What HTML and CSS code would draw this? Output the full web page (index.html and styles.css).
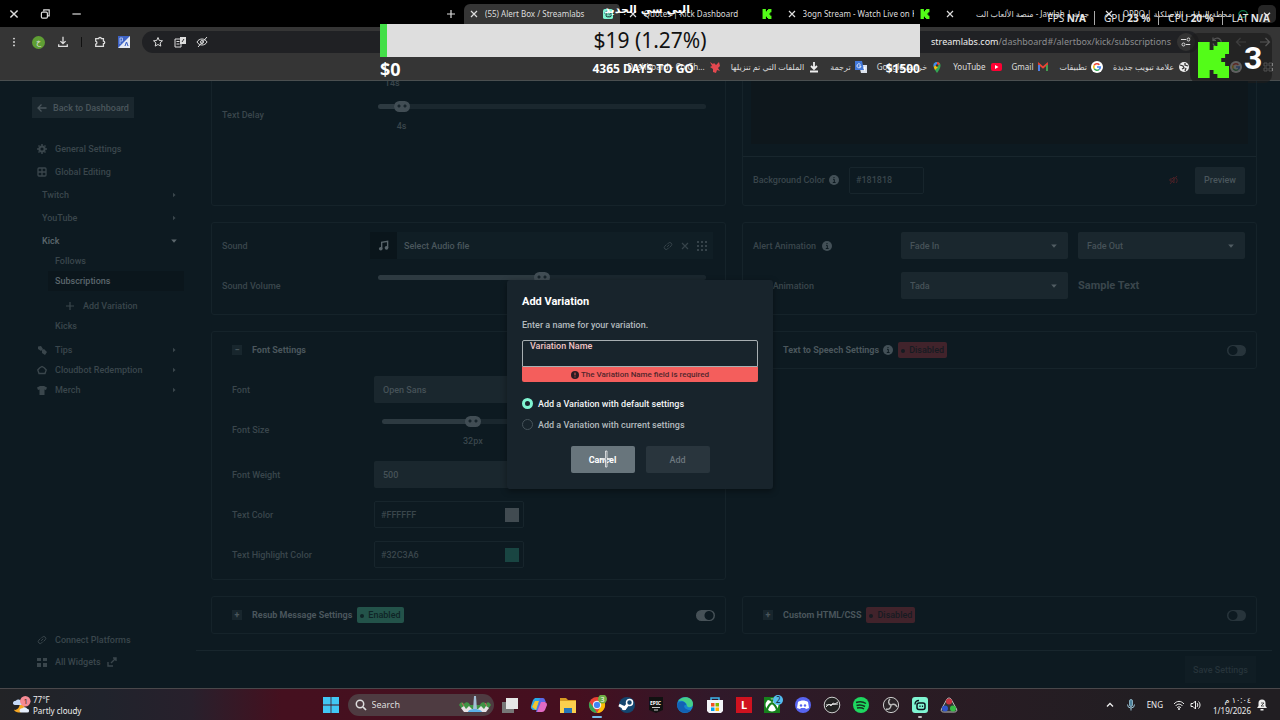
FILE: index.html
```html
<!DOCTYPE html>
<html lang="en">
<head>
    <meta charset="UTF-8">
    <meta name="viewport" content="width=device-width, initial-scale=1.0">
    <title>Alert Box / Streamlabs</title>
    <link rel="stylesheet" href="styles.css">
</head>
<body>
    <!-- shared icons -->
    <svg class="sprite" aria-hidden="true">
        <symbol id="close" viewBox="0 0 10 10"><path d="M2 2l6 6M8 2l-6 6" fill="none" stroke="currentColor" stroke-width="1.2"/></symbol>
        <symbol id="kick" viewBox="0 0 16 18"><path d="M0 0h6v4h2V2h2V0h6v6h-2v2h-2v2h2v2h2v6h-6v-2H8v-2H6v4H0z" fill="#53fc18"/></symbol>
        <symbol id="google" viewBox="0 0 12 12"><circle cx="6" cy="6" r="6" fill="#fff"/><g fill="none" stroke-width="1.6"><path d="M8.4 3.8A3.3 3.3 0 0 0 3.2 4.300" stroke="#ea4335"/><path d="M3.200 4.300a3.300 3.300 0 0 0 0 3.400" stroke="#fbbc05"/><path d="M3.200 7.700a3.300 3.300 0 0 0 4.900 .8" stroke="#34a853"/><path d="M8.100 8.500A3.300 3.300 0 0 0 9.300 6H6" stroke="#4285f4"/></g></symbol>
        <symbol id="streamlabs" viewBox="0 0 16 16"><rect width="16" height="16" rx="3" fill="#80f5d2"/><rect x="5" y="6" width="8" height="6.500" rx="2" fill="none" stroke="#09161d" stroke-width="1.500"/><path d="M3 7.500C3 5 4.500 3.500 7 3.500" fill="none" stroke="#09161d" stroke-width="1.300"/><path d="M8 8.500v1.500M10.500 8.500v1.500" stroke="#09161d" stroke-width="1.200"/></symbol>
        <symbol id="link" viewBox="0 0 12 12"><path d="M5 7L7.500 4.500M5 4l1.500-1.500a2.300 2.300 0 0 1 3.300 3.300L8 7.600M7 8L5.500 9.500a2.300 2.300 0 0 1-3.300-3.300L4 4.400" fill="none" stroke="currentColor" stroke-width="1.200"/></symbol>
        <symbol id="info" viewBox="0 0 10 10"><circle cx="5" cy="5" r="5" fill="currentColor"/><path d="M4 4.300h1.300v3.200M3.800 7.500h2.800M4.500 2.500h1" fill="none" stroke="#0d1a21" stroke-width="1"/></symbol>
        <symbol id="right" viewBox="0 0 6 6"><path d="M2 .8L4.600 3 2 5.200z" fill="currentColor"/></symbol>
        <symbol id="down" viewBox="0 0 6 6"><path d="M.2 1.500h5.600L3 4.800z" fill="currentColor"/></symbol>
        <symbol id="plus" viewBox="0 0 10 10"><path d="M5 1v8M1 5h8" stroke="currentColor" stroke-width="1.200"/></symbol>
        <symbol id="translate" viewBox="0 0 12 12"><rect width="12" height="12" fill="#e4e8f2"/><path d="M0 0h12L0 12z" fill="#3d62c4"/><path d="M2 8V2h2.500v3H2M7 10l1.500-4L10 10" fill="none" stroke="#a9bbec"/><path d="M7 10l1.500-4L10 10" fill="none" stroke="#3d62c4"/></symbol>
    </svg>

    <header class="browser">
        <div class="tab-strip">
            <div class="window-controls">
                <button aria-label="Close"><svg viewBox="0 0 10 10"><use href="#close"/></svg></button>
                <button aria-label="Restore"><svg viewBox="0 0 10 10"><rect x="2" y="3.500" width="5" height="5" rx="1" fill="none" stroke="currentColor"/><path d="M4 3V1.500h4.500V6.500H7.500" fill="none" stroke="currentColor"/></svg></button>
                <button aria-label="Minimize"><svg viewBox="0 0 10 10"><path d="M2 5h7" stroke="currentColor"/></svg></button>
            </div>
            <button class="new-tab" aria-label="New tab"><svg viewBox="0 0 10 10"><use href="#plus"/></svg></button>
            <div class="tabs">
                <div class="tab active">
                    <svg class="tab-close"><use href="#close"/></svg>
                    <span>(55) Alert Box / Streamlabs</span>
                    <svg class="favicon"><use href="#streamlabs"/></svg>
                </div>
                <div class="tab">
                    <svg class="tab-close"><use href="#close"/></svg>
                    <span>Quotes | Kick Dashboard</span>
                    <svg class="favicon"><use href="#kick"/></svg>
                </div>
                <div class="tab">
                    <svg class="tab-close"><use href="#close"/></svg>
                    <span>3ogn Stream - Watch Live on Kick</span>
                    <svg class="favicon"><use href="#kick"/></svg>
                </div>
                <div class="tab">
                    <svg class="tab-close"><use href="#close"/></svg>
                    <span dir="rtl">جولة | Jawlah - منصة الألعاب الت</span>
                </div>
                <div class="tab">
                    <svg class="tab-close"><use href="#close"/></svg>
                    <span dir="rtl">محطة البيانات اللاسلكية | OPPO</span>
                    <svg class="favicon" viewBox="0 0 12 12"><ellipse cx="6" cy="6" rx="5" ry="4" fill="none" stroke="#0b7a45" stroke-width="1.500"/></svg>
                </div>
            </div>
            <button class="tab-search" aria-label="Search tabs"><svg viewBox="0 0 10 10"><path d="M2.500 4L5 6.500 7.500 4" fill="none" stroke="currentColor" stroke-width="1.200"/></svg></button>
        </div>

        <div class="toolbar">
            <button aria-label="Menu"><svg viewBox="0 0 14 14"><g fill="currentColor"><circle cx="7" cy="3" r="1.100"/><circle cx="7" cy="7" r="1.100"/><circle cx="7" cy="11" r="1.100"/></g></svg></button>
            <span class="avatar">&#1582;</span>
            <button aria-label="Downloads"><svg viewBox="0 0 14 14"><path d="M7 1v8M4 6l3 3 3-3M2 9.500V12h10V9.500" fill="none" stroke="currentColor" stroke-width="1.500"/></svg></button>
            <i class="toolbar-line"></i>
            <button aria-label="Extensions"><svg viewBox="0 0 14 14"><path d="M2 3h3.500a1.500 1.500 0 0 1 3 0H11v3a1.500 1.500 0 0 1 0 3v3H2V9.500a1.800 1.800 0 0 0 0-3.500z" fill="none" stroke="currentColor" stroke-width="1.500"/></svg></button>
            <button aria-label="Translate"><svg viewBox="0 0 12 12"><use href="#translate"/></svg></button>
            <div class="address">
                <svg viewBox="0 0 12 12"><path d="M6 1.500l1.300 3 3.200.3-2.400 2.100.7 3.200L6 8.500l-2.800 1.600.7-3.200L1.500 4.800l3.200-.3z" fill="none" stroke="currentColor"/></svg>
                <svg viewBox="0 0 12 12"><path d="M1 3h6v8H1zM2.500 5.500h3M2.500 8h3" fill="none" stroke="currentColor"/><rect x="6" y="1" width="6" height="7" fill="currentColor"/><path d="M8 6l2-3" stroke="#333"/></svg>
                <svg viewBox="0 0 12 12"><path d="M1 6c2-4 8-4 10 0-2 4-8 4-10 0zM2 11l9-10" fill="none" stroke="currentColor"/><circle cx="6" cy="6" r="1.500" fill="none" stroke="currentColor"/></svg>
                <span class="url"><b>streamlabs.com</b>/dashboard#/alertbox/kick/subscriptions</span>
                <span class="site-info"><svg viewBox="0 0 12 12"><path d="M1 3.500h5M6 8.500h5" stroke="currentColor"/><circle cx="8.500" cy="3.500" r="1.500" fill="none" stroke="currentColor"/><circle cx="3.500" cy="8.500" r="1.500" fill="none" stroke="currentColor"/></svg></span>
            </div>
            <button aria-label="Reload"><svg viewBox="0 0 12 12"><path d="M2 1.500v3h3M2.300 4.500A4.200 4.200 0 1 1 2 7.500" fill="none" stroke="currentColor" stroke-width="1.200"/></svg></button>
            <button class="faded" aria-label="Forward"><svg viewBox="0 0 12 12"><path d="M11 6H1.500M5.500 2l-4 4 4 4" fill="none" stroke="currentColor" stroke-width="1.200"/></svg></button>
            <button aria-label="Back"><svg viewBox="0 0 12 12"><path d="M1 6h9.500M6.500 2l4 4-4 4" fill="none" stroke="currentColor" stroke-width="1.200"/></svg></button>
        </div>

        <nav class="bookmarks" dir="rtl">
            <svg viewBox="0 0 12 12"><path d="M2 2h3v3H2zM7 2h3v3H7zM2 7h3v3H2zM7 7h3v3H7z" fill="none" stroke="#ccc"/></svg>
            <svg class="bookmark-google" viewBox="0 0 12 12"><use href="#google"/></svg>
            <a href="#" class="bookmark bookmark-first"><svg viewBox="0 0 12 12"><circle cx="6" cy="6" r="5" fill="#eee"/><path d="M2 4l3 1 1 2-2 1M7 2v2l3 1M8 7l-1 3" fill="none" stroke="#333" stroke-width="1.300"/></svg>علامة تبويب جديدة</a>
            <a href="#" class="bookmark"><svg viewBox="0 0 12 12"><use href="#google"/></svg>تطبيقات</a>
            <a href="#" class="bookmark"><svg viewBox="0 0 12 12"><path d="M2 10V3l4 3.500L10 3v7" fill="none" stroke="#ea4335" stroke-width="1.800"/><path d="M2 10V4" stroke="#4285f4" stroke-width="1.800"/><path d="M10 10V4" stroke="#34a853" stroke-width="1.800"/></svg>Gmail</a>
            <a href="#" class="bookmark"><svg viewBox="0 0 12 12"><rect x="1" y="2" width="11" height="8" rx="2" fill="#f03"/><path d="M5 4l3.500 2L5 8z" fill="#fff"/></svg>YouTube</a>
            <a href="#" class="bookmark"><svg viewBox="0 0 12 12"><path d="M6 12C4 9 2.500 7 2.500 4.500a3.500 3.500 0 0 1 7 0C9.500 7 8 9 6 12z" fill="#34a853"/><path d="M2.800 6A3.500 3.500 0 0 1 6 1v3z" fill="#4285f4"/><path d="M6 1a3.500 3.500 0 0 1 3 2L6 5z" fill="#ea4335"/><path d="M2.800 6L5 4l2 2-3 3z" fill="#fbbc05"/><circle cx="6" cy="4.500" r="1.200" fill="#333"/></svg>خرائط Google</a>
            <a href="#" class="bookmark"><svg viewBox="0 0 12 12"><path d="M4 4h8v8H6z" fill="#dce3ee"/><path d="M0 0h7l2 9H0z" fill="#4277d8"/><path d="M5.500 3.500A2 2 0 1 0 6 5H4M8 7h3M9.500 6v4" fill="none" stroke="#fff" stroke-width=".8"/></svg>ترجمة</a>
            <a href="#" class="bookmark"><svg viewBox="0 0 12 12"><path d="M6 1v6M3 5l3 3 3-3M2 10.500h8" fill="none" stroke="#eee" stroke-width="1.800"/></svg>الملفات التي تم تنزيلها</a>
            <a href="#" class="bookmark"><svg viewBox="0 0 12 12"><path d="M1 1l3 2 1-1 2 2 3-3 1 4-2 2 2 3-3-1-1 3-3-1V8L1 6l2-1z" fill="#e5484f"/></svg><span dir="ltr">Dashboard - Co Gh...</span></a>
        </nav>
    </header>

    <!-- stream widgets drawn over the browser -->
    <div class="goal">
        <div class="goal-bar"><div class="goal-fill"></div><span>$19 (1.27%)</span></div>
        <div class="goal-labels"><b class="goal-start">$0</b><b>4365 DAYS TO GO</b><b>$1500</b></div>
    </div>
    <div class="goal-title" dir="rtl">البي سي الجديد</div>
    <div class="stats"><span>FPS <b>N/A</b></span><span>GPU <b>23 %</b></span><span>CPU <b>20 %</b></span><span>LAT <b>N/A</b></span></div>
    <div class="viewers"><svg viewBox="0 0 16 18" preserveAspectRatio="none"><use href="#kick"/></svg><b>3</b></div>

    <div class="page">
        <aside class="sidebar">
            <button class="back"><svg viewBox="0 0 10 10"><path d="M9.500 5H1M4.500 1.500L1 5l3.500 3.500" fill="none" stroke="currentColor" stroke-width="1.300"/></svg>Back to Dashboard</button>
            <nav class="menu">
                <a href="#" class="item"><svg viewBox="0 0 10 10"><circle cx="5" cy="5" r="2.600" fill="none" stroke="currentColor" stroke-width="2"/><path d="M5 0v2M5 8v2M0 5h2M8 5h2M1.500 1.500l1 1M7.500 7.500l1 1M8.500 1.500l-1 1M1.500 8.500l1-1" stroke="currentColor" stroke-width="1.500"/></svg>General Settings</a>
                <a href="#" class="item"><svg viewBox="0 0 10 10"><rect x="1" y="1" width="8" height="8" rx="1" fill="none" stroke="currentColor" stroke-width="1.300"/><path d="M5 1v8M1 5h8" stroke="currentColor" stroke-width="1.300"/></svg>Global Editing</a>
                <a href="#" class="item platform">Twitch<svg class="arrow"><use href="#right"/></svg></a>
                <a href="#" class="item platform">YouTube<svg class="arrow"><use href="#right"/></svg></a>
                <a href="#" class="item platform open">Kick<svg class="arrow"><use href="#down"/></svg></a>
                <div class="submenu">
                    <a href="#">Follows</a>
                    <a href="#" class="selected">Subscriptions</a>
                    <a href="#" class="add-variation"><svg viewBox="0 0 10 10"><use href="#plus"/></svg>Add Variation</a>
                    <a href="#">Kicks</a>
                </div>
                <div class="extras">
                    <a href="#" class="item"><svg viewBox="0 0 10 10"><path d="M1 1.500l3-.5 2 3-2 2-3-2zM5 5l2-1 3 3-2 3-3-2z" fill="currentColor"/></svg>Tips<svg class="arrow"><use href="#right"/></svg></a>
                    <a href="#" class="item"><svg viewBox="0 0 10 10"><path d="M2 8.500L.8 5 2.500 3 5 1.500 7.500 3l1.700 2L8 8.500z" fill="none" stroke="currentColor" stroke-width="1.400"/></svg>Cloudbot Redemption<svg class="arrow"><use href="#right"/></svg></a>
                    <a href="#" class="item"><svg viewBox="0 0 10 10"><path d="M3 1h4l3 1.500L9 5l-1.500-.5V10h-5V4.500L1 5 0 2.500z" fill="currentColor"/></svg>Merch<svg class="arrow"><use href="#right"/></svg></a>
                </div>
            </nav>
            <nav class="menu menu-bottom">
                <a href="#" class="item"><svg viewBox="0 0 12 12"><use href="#link"/></svg>Connect Platforms</a>
                <a href="#" class="item"><svg viewBox="0 0 10 10"><path d="M0 1h4v3H0zM6 1h4v3H6zM0 6h4v4H0zM6 6h4v4H6z" fill="currentColor"/></svg>All Widgets<svg class="external" viewBox="0 0 10 10"><path d="M4 6l5-5M6 1h3v3M1 5v4h5" fill="none" stroke="currentColor" stroke-width="1.400"/></svg></a>
            </nav>
        </aside>

        <main class="editor">
            <div class="cards">
                <section class="card card-delay">
                    <div class="row">
                        <label for="duration">Alert Duration</label>
                        <div class="slider"><input type="range" id="duration" value="4" style="--value: 4%"><output style="--value: 2%">14s</output></div>
                    </div>
                    <div class="row">
                        <label for="delay">Text Delay</label>
                        <div class="slider"><input type="range" id="delay" value="5" style="--value: 5%"><output style="--value: 5%">4s</output></div>
                    </div>
                </section>

                <section class="card card-preview">
                    <div class="preview"></div>
                    <div class="preview-bar">
                        <label for="background">Background Color</label>
                        <svg class="info"><use href="#info"/></svg>
                        <input type="text" id="background" class="color-input" value="#181818">
                        <svg class="muted" viewBox="0 0 10 10"><path d="M1 4h2l2-2v6L3 6H1zM1 9l7-8M7 3c1.500 1 1.500 4 0 5" fill="none" stroke="currentColor"/></svg>
                        <button class="button">Preview</button>
                    </div>
                </section>

                <section class="card">
                    <div class="row">
                        <span class="label">Sound</span>
                        <div class="sound">
                            <span class="note"><svg viewBox="0 0 12 12"><path d="M4 9.500V2.500l6.500-1v7" fill="none" stroke="currentColor" stroke-width="1.500"/><circle cx="3" cy="9.500" r="2" fill="currentColor"/><circle cx="9.300" cy="8.500" r="2" fill="currentColor"/></svg></span>
                            <span class="file">Select Audio file
                                <svg viewBox="0 0 12 12"><use href="#link"/></svg>
                                <svg viewBox="0 0 10 10"><use href="#close"/></svg>
                                <svg viewBox="0 0 10 10"><path d="M0 1h10M0 5h10M0 9h10" stroke="currentColor" stroke-width="2" stroke-dasharray="2 2"/></svg>
                            </span>
                        </div>
                    </div>
                    <div class="row">
                        <label for="volume">Sound Volume</label>
                        <div class="slider"><input type="range" id="volume" value="50" style="--value: 50%"></div>
                    </div>
                </section>

                <section class="card">
                    <div class="row animation">
                        <label for="fade-in">Alert Animation <svg class="info"><use href="#info"/></svg></label>
                        <div class="select"><select id="fade-in"><option>Fade In</option></select><svg><use href="#down"/></svg></div>
                        <div class="select"><select aria-label="Exit animation"><option>Fade Out</option></select><svg><use href="#down"/></svg></div>
                    </div>
                    <div class="row animation">
                        <label for="text-animation">Text Animation</label>
                        <div class="select"><select id="text-animation"><option>Tada</option></select><svg><use href="#down"/></svg></div>
                        <span class="sample">Sample Text</span>
                    </div>
                </section>

                <section class="card card-fold">
                    <h2><span class="fold">&minus;</span>Font Settings</h2>
                    <div class="fields">
                        <div class="row">
                            <label for="font">Font</label>
                            <div class="select"><select id="font"><option>Open Sans</option></select><svg><use href="#down"/></svg></div>
                        </div>
                        <div class="row row-size">
                            <label for="size">Font Size</label>
                            <div class="slider"><input type="range" id="size" value="27" style="--value: 27%"><output style="--value: 27%">32px</output></div>
                        </div>
                        <div class="row">
                            <label for="weight">Font Weight</label>
                            <div class="select"><select id="weight"><option>500</option></select><svg><use href="#down"/></svg></div>
                        </div>
                        <div class="row">
                            <label for="color">Text Color</label>
                            <div class="color"><input type="text" id="color" class="color-input" value="#FFFFFF"><i class="swatch"></i></div>
                        </div>
                        <div class="row">
                            <label for="highlight">Text Highlight Color</label>
                            <div class="color"><input type="text" id="highlight" class="color-input" value="#32C3A6"><i class="swatch green"></i></div>
                        </div>
                    </div>
                </section>

                <section class="card card-fold">
                    <h2><span class="fold">+</span>Text to Speech Settings<svg class="info"><use href="#info"/></svg><em class="badge off">Disabled</em><input type="checkbox" class="switch" aria-label="Text to Speech"></h2>
                </section>

                <section class="card card-fold">
                    <h2><span class="fold">+</span>Resub Message Settings<em class="badge">Enabled</em><input type="checkbox" class="switch" aria-label="Resub Message" checked></h2>
                </section>

                <section class="card card-fold">
                    <h2><span class="fold">+</span>Custom HTML/CSS<em class="badge off">Disabled</em><input type="checkbox" class="switch" aria-label="Custom HTML/CSS"></h2>
                </section>
            </div>
            <footer class="save-bar"><button class="save" disabled>Save Settings</button></footer>
        </main>

        <div class="overlay">
            <form class="modal">
                <h1>Add Variation</h1>
                <p>Enter a name for your variation.</p>
                <div class="name-field">
                    <label for="name">Variation Name</label>
                    <input type="text" id="name">
                </div>
                <div class="error"><svg viewBox="0 0 10 10"><circle cx="5" cy="5" r="5" fill="#2a1b21"/><path d="M5 2v3.500M5 6.800v1.200" stroke="#f45e5c" stroke-width="1.200"/></svg>The Variation Name field is required</div>
                <div class="choice"><input type="radio" name="settings" id="default" checked><label for="default">Add a Variation with default settings</label></div>
                <div class="choice"><input type="radio" name="settings" id="current"><label for="current">Add a Variation with current settings</label></div>
                <div class="actions">
                    <button type="button" class="cancel">Cancel<svg class="cursor" viewBox="0 0 12 18"><path d="M5.500 1h1.500v7.500h4v1H7V17H5.500V9.500H1v-1h4.500z" fill="#6b767c" stroke="#fff" stroke-width=".7"/></svg></button>
                    <button type="submit" class="add" disabled>Add</button>
                </div>
            </form>
        </div>
    </div>

    <footer class="taskbar">
        <div class="weather">
            <svg viewBox="0 0 20 20"><path d="M8 6a6 6 0 1 1-6 9c4 1 7-3 6-9z" fill="#f5a623"/><path d="M1 8.500a3 3 0 0 1 3-3 3.500 3.500 0 0 1 6 1 2 2 0 0 1 0 3.500H3A2 2 0 0 1 1 8.500z" fill="#c6dbfa"/><path d="M8 16a2.500 2.500 0 0 1 3-2.500 3 3 0 0 1 5 .5 2 2 0 0 1 0 4h-6a2 2 0 0 1-2-2z" fill="#e6effc"/><circle cx="14" cy="6" r="5.500" fill="#f58a94"/><text x="12" y="9" font-size="8" fill="#422">1</text></svg>
            <div>77°F<br>Partly cloudy</div>
        </div>
        <div class="apps">
            <svg class="start" viewBox="0 0 16 16"><path d="M0 0h7.600v7.600H0zM8.400 0H16v7.600H8.400zM0 8.400h7.600V16H0zM8.400 8.400H16V16H8.400z" fill="#41c7f5"/></svg>
            <div class="search">
                <svg viewBox="0 0 12 12"><circle cx="5" cy="5" r="3.700" fill="none" stroke="#ddd" stroke-width="1.500"/><path d="M8 8l3 3" stroke="#ddd" stroke-width="1.700"/></svg>
                <input type="text" aria-label="Search" placeholder="Search">
                <svg class="fountain" viewBox="0 0 32 18"><path d="M0 9c2-4 4-3 5-1 2-3 5-2 6 1h10c1-3 4-4 6-1 1-2 3-3 5 1l-3 4H3z" fill="#3f9444"/><path d="M2 12l3-2 2 3 3-3 3 3h6l3-3 3 3 2-3 3 2-3 4H5z" fill="#e7e2e5"/><path d="M15 0h2l1 14h-4z" fill="#a4bfd6"/><path d="M9 16c0-4 13-4 14 0z" fill="#5cb2e8"/><path d="M3 7l2 3M26 7l2 3" stroke="#d35b62"/></svg>
            </div>
            <div class="app-list">
                <svg viewBox="0 0 20 20"><rect x="2" y="7" width="12" height="11" fill="#777"/><rect x="6" y="3" width="12" height="11" fill="#e6e6e6"/></svg>
                <svg viewBox="0 0 20 20"><path d="M6 3h7l-4 12H5a3 3 0 0 1-3-4l2-6z" fill="#27a9e8"/><path d="M3 12l3-6h4l-3 9z" fill="#f2c531"/><path d="M11 3h3c2 0 2 3 3 4h-4l-4 10H7z" fill="#5a6ae8"/><path d="M12 7h4a3 3 0 0 1 2 3l-2 5a4 4 0 0 1-3 2H8z" fill="#e26ac4"/></svg>
                <svg viewBox="0 0 20 20"><path d="M2 3h6l2 2h8v13H2z" fill="#d79b22"/><path d="M2 6h16v12H2z" fill="#fbcf4d"/><path d="M6 18v-5h8v5" fill="#2675b8"/></svg>
                <span class="current"><svg viewBox="0 0 20 20"><circle cx="10" cy="10" r="8" fill="#ea4335"/><path d="M2.500 7l4.500 6 3 5A8 8 0 0 1 2.500 7z" fill="#34a853"/><path d="M10 18l4-7-4-5h7a8 8 0 0 1-7 12z" fill="#fbbc05"/><circle cx="10" cy="10" r="3.800" fill="#4285f4" stroke="#fff"/><circle cx="15.500" cy="4" r="4.500" fill="#6fae45"/><text x="13.500" y="6.500" font-size="7" fill="#fff">3</text></svg></span>
                <svg viewBox="0 0 20 20"><circle cx="10" cy="10" r="8" fill="#14466f"/><path d="M2 10l6 3 3-4" stroke="#fff" stroke-width="3" fill="none"/><circle cx="12.500" cy="7.500" r="3" fill="#14466f" stroke="#fff" stroke-width="1.500"/><circle cx="7" cy="13" r="2.300" fill="#fff"/></svg>
                <svg viewBox="0 0 20 20"><path d="M3 2h14v13l-7 3-7-3z" fill="#111"/><text x="4" y="10" font-size="5" font-weight="bold" fill="#fff">EPIC</text><path d="M6 12.500h8M8 15h4" stroke="#ccc"/></svg>
                <svg viewBox="0 0 20 20"><circle cx="10" cy="10" r="8" fill="#1684cf"/><path d="M3 6c4-6 15-5 15 3 0 4-5 4-6 2 0-4-5-6-9-5z" fill="#45cf89"/><path d="M2 10c2-5 9-4 9 0-3-1-3 5 5 5-4 5-13 3-14-5z" fill="#1261b4"/></svg>
                <svg viewBox="0 0 20 20"><path d="M6 6V3h8v3" fill="none" stroke="#3bb4ea" stroke-width="1.500"/><path d="M2 5h16v11l-2 2H4l-2-2z" fill="#f2f4f7"/><path d="M6 8h3.500v3.500H6z" fill="#f25022"/><path d="M10.500 8H14v3.500h-3.500z" fill="#7fba00"/><path d="M6 12.500h3.500V16H6z" fill="#00a4ef"/><path d="M10.500 12.500H14V16h-3.500z" fill="#ffb900"/></svg>
                <svg viewBox="0 0 20 20"><rect x="2" y="2" width="16" height="16" fill="#d0121f"/><text x="7" y="14" font-size="11" font-weight="bold" fill="#fff">L</text></svg>
                <svg viewBox="0 0 20 20"><rect x="1" y="2" width="16" height="16" fill="#16801c"/><circle cx="9" cy="10" r="6.500" fill="#fff"/><path d="M4 15c1-4 3-6 5-7 2 1 4 3 5 7M5 4c2 0 3 1 4 2 1-1 2-2 4-2" fill="none" stroke="#16801c" stroke-width="2"/><circle cx="15" cy="5" r="5" fill="#55bdf0"/><text x="13" y="8" font-size="8" fill="#123">2</text></svg>
                <svg viewBox="0 0 20 20"><circle cx="10" cy="10" r="8" fill="#5865f2"/><path d="M5 7c3-2 7-2 10 0l1 6-3 1-1-1H8l-1 1-3-1z" fill="#fff"/><circle cx="8" cy="10.500" r="1.200" fill="#5865f2"/><circle cx="12" cy="10.500" r="1.200" fill="#5865f2"/></svg>
                <svg viewBox="0 0 20 20"><circle cx="10" cy="10" r="7.800" fill="#222" stroke="#ccc"/><path d="M4 12l3-3 2 2 2-3 2 1 3-2M4 10l12-1" fill="none" stroke="#ddd"/></svg>
                <svg viewBox="0 0 20 20"><circle cx="10" cy="10" r="8" fill="#1ed760"/><path d="M5 7.500c3-1 7-1 10 1M5.500 10.500c3-1 6-.5 8.500 1M6 13c2.500-.5 5-.5 7 1" fill="none" stroke="#14331f" stroke-width="1.500"/></svg>
                <svg viewBox="0 0 20 20"><circle cx="10" cy="10" r="7.600" fill="#2b2529" stroke="#ccc"/><path d="M10 10c-3-1-3-4-1-6M10 10c3-2 5 0 6 2M10 10c0 3-2 5-5 4" fill="none" stroke="#bbb" stroke-width="1.500"/></svg>
                <span class="running"><svg viewBox="-2 -2 20 20"><use href="#streamlabs" width="16" height="16"/></svg></span>
                <svg viewBox="0 0 20 20"><path d="M8 4a2.500 2.500 0 0 1 4 0l5.500 10c1 2-.5 3-2 3h-11c-1.500 0-3-1-2-3z" fill="#333" stroke="#bbb"/><circle cx="10" cy="6.500" r="3" fill="#c63341"/><circle cx="6" cy="13.500" r="3" fill="#3155cc"/><circle cx="14" cy="13.500" r="3" fill="#35bd45"/></svg>
            </div>
        </div>
        <div class="tray">
            <svg viewBox="0 0 12 12"><path d="M3 7.500l3-3 3 3" fill="none" stroke="currentColor" stroke-width="1.300"/></svg>
            <svg viewBox="0 0 12 12"><rect x="4.500" y="0.500" width="3" height="7" rx="1.500" fill="#4e839d" stroke="#9cc4d6" stroke-width=".8"/><path d="M2.500 5.500a3.500 3.500 0 0 0 7 0M6 9v2.500" fill="none" stroke="#9cc4d6"/></svg>
            <span class="language">ENG</span>
            <svg viewBox="0 0 12 12"><path d="M1 5c3-3.500 7-3.500 10 0M2.500 7c2-2.500 5-2.500 7 0M4 8.800c1-1.300 3-1.300 4 0" fill="none" stroke="currentColor"/><circle cx="6" cy="10" r="1" fill="currentColor"/></svg>
            <svg viewBox="0 0 12 12"><path d="M1 4.500h2L5.500 2v8L3 7.500H1zM7 4c1 1 1 3 0 4M8.500 2.500c2 2 2 5 0 7" fill="none" stroke="currentColor"/></svg>
            <div class="clock"><span dir="rtl">١٠:٠٤ م</span><br>1/19/2026</div>
            <svg viewBox="0 0 12 12"><path d="M1 9l1.500-2V4a3.500 3.500 0 0 1 7 0v3L11 9zM4.500 10h3v1.500h-3z" fill="#eee"/><path d="M5 4h3L5 7h3" fill="none" stroke="#333" stroke-width=".8"/></svg>
        </div>
    </footer>
</body>
</html>
```

FILE: styles.css
```css
* {
    margin: 0;
    padding: 0;
    box-sizing: border-box;
}

body {
    height: 100vh;
    display: flex;
    flex-direction: column;
    position: relative;
    overflow: hidden;
    background: #0d1a21;
    color: #3a464c;
    font-family: Roboto, "Liberation Sans", sans-serif;
    font-size: 9px;
    line-height: 14px;
}

svg {
    width: 12px;
    height: 12px;
    flex: none;
}

a {
    color: inherit;
    text-decoration: none;
}

button, input, select {
    font: inherit;
    color: inherit;
    border: none;
    background: none;
    outline: none;
}

.sprite {
    position: absolute;
    width: 0;
    height: 0;
}

/* browser window */
.browser {
    background: #353535;
    border-bottom: 1px solid #4a4f50;
    color: #ddd;
    font-family: "Noto Sans", "DejaVu Sans", sans-serif;
    font-size: 8px;
}

.tab-strip {
    height: 27px;
    display: flex;
    align-items: center;
    background: #000;
    padding-right: 4px;
}

.tab-strip button, .toolbar button {
    display: flex;
}

.window-controls {
    display: flex;
    gap: 19px;
    padding-left: 8px;
    margin-right: auto;
}

.new-tab {
    margin-right: 8px;
}

.new-tab svg {
    width: 10px;
    height: 10px;
}

.tabs {
    display: flex;
    flex: 0 1 794px;
    min-width: 0;
    align-self: flex-end;
}

.tab {
    flex: 1;
    min-width: 0;
    height: 23px;
    display: flex;
    align-items: center;
    gap: 6px;
    padding: 0 7px 3px 5px;
    border-right: 3px solid #000;
    border-radius: 6px 6px 0 0;
}

.tab span {
    flex: 1;
    overflow: hidden;
    white-space: nowrap;
}

.tab-close, .favicon {
    width: 10px;
    height: 10px;
}

.active {
    background: #353535;
}

.tab-search {
    width: 18px;
    height: 18px;
    align-items: center;
    justify-content: center;
    border-radius: 5px;
    background: #262626;
}

.toolbar {
    height: 30px;
    display: flex;
    align-items: center;
    gap: 12px;
    padding: 0 9px 0 8px;
}

.avatar {
    width: 13px;
    height: 13px;
    border-radius: 50%;
    background: #5f9e34;
    text-align: center;
    line-height: 12px;
}

.toolbar-line {
    width: 1px;
    height: 10px;
    background: #111;
}

.address {
    flex: 1;
    height: 22px;
    display: flex;
    align-items: center;
    gap: 10px;
    padding: 0 4px 0 10px;
    border-radius: 11px;
    background: #202124;
}

.url {
    margin-left: auto;
    color: #8c8d8f;
    font-size: 9px;
}

.url b {
    color: #eee;
    font-weight: 400;
}

.site-info {
    width: 18px;
    height: 18px;
    display: flex;
    align-items: center;
    justify-content: center;
    border-radius: 50%;
    background: #333;
}

.address .url + .site-info {
    margin-left: -4px;
}

.faded {
    opacity: .5;
}

.bookmarks {
    height: 23px;
    display: flex;
    align-items: center;
    gap: 10px;
    padding: 0 6px 4px;
}

.bookmark-google {
    margin-right: 10px;
}

.bookmark {
    display: flex;
    align-items: center;
    gap: 4px;
    white-space: nowrap;
}

.bookmark-first {
    margin-right: 30px;
}

/* stream widgets */
.goal {
    position: absolute;
    top: 24px;
    left: 50%;
    width: 540px;
    margin-left: -260px;
    font-family: "Noto Sans", sans-serif;
    color: #fff;
}

.goal-bar {
    position: relative;
    height: 33px;
    background: #dedede;
    color: #111;
    text-align: center;
    font-size: 21px;
    line-height: 32px;
}

.goal-fill {
    position: absolute;
    width: 7px;
    height: 100%;
    background: #43df48;
}

.goal-labels {
    display: flex;
    justify-content: space-between;
    align-items: center;
    height: 24px;
    font-size: 12px;
}

.goal-start {
    font-size: 18px;
}

.goal-title {
    position: absolute;
    top: 0;
    left: 610px;
    width: 80px;
    color: #fff;
    font: bold 11px/19px "DejaVu Sans", sans-serif;
    white-space: nowrap;
}

.stats {
    position: absolute;
    top: 11px;
    right: 10px;
    display: flex;
    color: #e6e6e6;
    font-size: 10px;
    font-family: "Noto Sans", sans-serif;
}

.stats span + span {
    margin-left: 8px;
    padding-left: 9px;
    border-left: 1px solid #aaa;
}

.viewers {
    position: absolute;
    top: 33px;
    right: 8px;
    width: 82px;
    height: 50px;
    display: flex;
    align-items: center;
    gap: 15px;
    padding-left: 8px;
    border-radius: 8px;
    background: rgba(28, 28, 28, .7);
    color: #fff;
    font-size: 32px;
}

.viewers svg {
    width: 31px;
    height: 36px;
    margin-top: 4px;
}

/* streamlabs dashboard */
.page {
    flex: 1;
    min-height: 0;
    display: flex;
    position: relative;
    font-weight: 500;
}

.sidebar {
    width: 196px;
    display: flex;
    flex-direction: column;
    padding: 16px 0;
}

.back {
    align-self: flex-start;
    height: 21px;
    display: flex;
    align-items: center;
    gap: 6px;
    margin-left: 32px;
    padding: 0 5px;
    background: #1a272e;
    color: #4a565c;
}

.back svg, .menu svg {
    width: 10px;
    height: 10px;
}

.menu {
    margin: 19px 19px 0 37px;
}

.item {
    height: 23px;
    display: flex;
    align-items: center;
    gap: 8px;
}

.platform {
    padding-left: 5px;
}

.open {
    color: #5c676d;
}

.menu .arrow {
    width: 6px;
    height: 6px;
    margin-left: auto;
}

.submenu {
    margin-top: -1px;
}

.submenu a {
    height: 20px;
    display: flex;
    align-items: center;
    padding-left: 18px;
}

.submenu .selected {
    margin: 0 -7px 0 11px;
    padding-left: 7px;
    background: #0b161c;
    color: #5c676d;
}

.submenu .add-variation {
    gap: 8px;
    margin-top: 5px;
    padding-left: 28px;
}

.extras {
    margin-top: 4px;
}

.extras .item {
    height: 20px;
}

.menu-bottom {
    margin-top: auto;
    margin-bottom: -1px;
}

.menu-bottom .item {
    height: 22px;
}

.menu .external {
    margin-left: -2px;
}

.editor {
    flex: 1;
    min-width: 0;
    display: flex;
    flex-direction: column;
    overflow: hidden;
}

.cards {
    display: grid;
    grid-template-columns: 1fr 1fr;
    align-items: start;
    gap: 16px;
    margin-top: -40px;
    padding: 0 23px 16px 15px;
}

.card {
    min-width: 0;
    display: flex;
    flex-direction: column;
    gap: 13px;
    padding: 9px 10px 15px;
    border: 1px solid #15232a;
    border-radius: 3px;
}

.card-delay {
    height: 165px;
    gap: 16px;
    padding-top: 16px;
}

.row {
    height: 27px;
    display: flex;
    align-items: center;
}

.row label, .row .label {
    width: 148px;
    flex: none;
}

.info {
    width: 10px;
    height: 10px;
    margin-left: 4px;
    vertical-align: middle;
    color: #435057;
}

.slider {
    flex: 1;
    align-self: flex-start;
    margin: 0 9px 0 8px;
}

.slider input {
    display: block;
    width: 100%;
    height: 11px;
    appearance: none;
}

.slider input::-webkit-slider-runnable-track {
    height: 5px;
    border-radius: 3px;
    background: linear-gradient(to right, #2d3a41 var(--value), #1a272e var(--value));
}

.slider input::-webkit-slider-thumb {
    appearance: none;
    width: 16px;
    height: 11px;
    margin-top: -3px;
    border-radius: 6px;
    background: radial-gradient(circle at 5px 5px, #17242b 1px, transparent 2px), radial-gradient(circle at 11px 5px, #17242b 1px, #414d54 2px);
}

.slider output {
    display: flex;
    justify-content: center;
    width: 16px;
    margin: 7px 16px 0 calc(var(--value) - var(--value) * .05);
}

.card-preview {
    height: 165px;
    padding: 0;
    gap: 0;
}

.preview {
    flex: 1;
    margin: 8px 8px 12px;
    background: #0e171c;
}

.preview-bar {
    height: 49px;
    display: flex;
    align-items: center;
    padding: 0 11px 2px 10px;
    border-top: 1px solid #18262d;
}

.color-input {
    width: 75px;
    height: 27px;
    padding: 0 6px;
    border: 1px solid #17252c;
    border-radius: 2px;
}

.preview-bar .color-input {
    margin-left: 10px;
}

.muted {
    width: 10px;
    height: 10px;
    margin-left: auto;
    margin-right: 16px;
    color: #4a2026;
}

.button {
    width: 50px;
    height: 27px;
    border-radius: 2px;
    background: #1a272e;
    color: #4a565c;
}

.sound {
    flex: 1;
    display: flex;
    height: 27px;
    margin-right: 2px;
}

.note {
    width: 27px;
    display: flex;
    align-items: center;
    justify-content: center;
    background: #0a151b;
    color: #59656b;
}

.note svg {
    width: 11px;
    height: 11px;
}

.file {
    flex: 1;
    display: flex;
    align-items: center;
    gap: 7px;
    padding: 0 6px 0 7px;
    background: #101e25;
    color: #4a565c;
}

.file svg {
    width: 10px;
    height: 10px;
    color: #36434a;
}

.file svg:first-of-type {
    margin-left: auto;
}

.animation {
    gap: 10px;
    margin-right: 1px;
}

.animation label {
    width: 138px;
}

.animation > :not(label) {
    flex: 1;
}

.select {
    flex: 1;
    position: relative;
}

.select select {
    display: block;
    width: 100%;
    height: 27px;
    padding: 0 9px;
    appearance: none;
    border-radius: 2px;
    background: #1a272e;
    color: #465258;
}

.select svg {
    position: absolute;
    top: 11px;
    right: 11px;
    width: 6px;
    height: 6px;
    color: #525e64;
}

.sample {
    font-size: 11px;
    font-weight: 700;
}

.card-fold {
    gap: 9px;
    padding: 0 10px;
}

.card-fold h2 {
    height: 36px;
    display: flex;
    align-items: center;
    padding-left: 10px;
    color: #4a565c;
    font-size: 9px;
    font-weight: 700;
}

.fold {
    width: 10px;
    height: 10px;
    margin-right: 10px;
    background: #18262d;
    text-align: center;
    line-height: 10px;
}

.fields {
    display: flex;
    flex-direction: column;
    gap: 13px;
    padding: 0 10px 11px;
    margin-top: -1px;
}

.fields .row label {
    width: 142px;
}

.fields .slider {
    margin-right: 0;
}

.fields .row-size {
    height: 32px;
}

.fields .row-size label {
    margin-top: -5px;
}

.color {
    position: relative;
    width: 150px;
}

.color .color-input {
    display: block;
    width: 100%;
}

.swatch {
    position: absolute;
    top: 7px;
    right: 5px;
    width: 14px;
    height: 14px;
    background: #414b51;
}

.green {
    background: #194542;
}

.badge {
    height: 16px;
    margin-left: 5px;
    padding: 0 3px;
    border-radius: 2px;
    background: #23534a;
    color: #0f2426;
    font-style: normal;
    font-weight: 500;
    line-height: 16px;
}

.badge::before {
    content: "";
    display: inline-block;
    width: 4px;
    height: 4px;
    margin-right: 4px;
    border-radius: 50%;
    background: currentColor;
    vertical-align: middle;
}

.off {
    background: #41232b;
    color: #161b22;
}

.switch {
    width: 19px;
    height: 11px;
    margin-left: auto;
    appearance: none;
    border-radius: 6px;
    background: radial-gradient(circle at 6px 50%, #0d1a21 4px, #27343b 5px);
}

.switch:checked {
    background: radial-gradient(circle at 13px 50%, #0d1a21 4px, #465157 5px);
}

.save-bar {
    flex: 1;
    display: flex;
    align-items: center;
    justify-content: flex-end;
    margin-right: 8px;
    padding-right: 16px;
    border-top: 1px solid #18262d;
}

.save {
    height: 27px;
    padding: 0 8px;
    background: #101d24;
    color: #26333a;
}

/* add variation dialog */
.overlay {
    position: absolute;
    inset: 0;
    display: flex;
    align-items: center;
    justify-content: center;
}

.modal {
    width: 266px;
    padding: 14px 15px 16px;
    border-radius: 3px;
    background: #18242c;
    box-shadow: 0 2px 6px rgba(0, 0, 0, .4);
    color: #b3babe;
}

.modal h1 {
    color: #fff;
    font-size: 11px;
    font-weight: 700;
    line-height: 16px;
}

.modal p {
    margin: 8px 0;
}

.name-field {
    position: relative;
    height: 27px;
    border: 1px solid #a8afb2;
    border-radius: 2px 2px 0 0;
}

.name-field label {
    position: absolute;
    top: -2px;
    left: 7px;
    color: #f0c4c6;
}

.name-field input {
    width: 100%;
    height: 100%;
    padding: 8px 7px 0;
}

.error {
    height: 15px;
    display: flex;
    align-items: center;
    justify-content: center;
    gap: 2px;
    margin-bottom: 11px;
    border-radius: 0 0 2px 2px;
    background: #f45e5c;
    color: #51262c;
    font-size: 8px;
}

.error svg {
    width: 8px;
    height: 8px;
}

.choice {
    height: 21px;
    display: flex;
    align-items: center;
    gap: 5px;
}

.choice input {
    width: 11px;
    height: 11px;
    appearance: none;
    border: 1px solid #46535a;
    border-radius: 50%;
}

.choice input:checked {
    border: 3px solid #80f5d2;
}

.choice input:checked + label {
    color: #f2f4f5;
}

.actions {
    display: flex;
    justify-content: center;
    gap: 11px;
    margin-top: 11px;
}

.actions button {
    width: 64px;
    height: 27px;
    border-radius: 2px;
}

.cancel {
    position: relative;
    background: #68757c;
    color: #fff;
    font-weight: 700;
}

.cursor {
    position: absolute;
    top: 4px;
    left: 29px;
    height: 18px;
}

.add {
    background: #29353d;
    color: #6c777d;
}

/* windows taskbar */
.taskbar {
    height: 32px;
    display: grid;
    grid-template-columns: 1fr auto 1fr;
    align-items: center;
    border-top: 1px solid #4a484b;
    background: linear-gradient(to right, #222326, #20232c 8%, #28202c 15%, #45101f 22%, #450f1f 45%, #30192a 56%, #2b1b24 70%, #211e22 90%);
    color: #eee;
    font-family: "Noto Sans", "DejaVu Sans", sans-serif;
    font-size: 8px;
    line-height: 11px;
}

.weather {
    display: flex;
    align-items: center;
    gap: 2px;
    padding-left: 12px;
}

.weather svg {
    width: 19px;
    height: 20px;
}

.apps, .app-list, .search, .tray {
    display: flex;
    align-items: center;
}

.start {
    width: 16px;
    height: 16px;
    margin: 0 9px 0 2px;
}

.search {
    width: 146px;
    height: 22px;
    gap: 5px;
    padding: 0 3px 0 7px;
    border-radius: 11px;
    background: #4e3b41;
}

.search input {
    min-width: 0;
    flex: 1;
    font-size: 9px;
}

.search input::placeholder {
    color: #ddd;
}

.search .fountain {
    width: 32px;
    height: 18px;
}

.app-list {
    width: 460px;
    justify-content: space-between;
    margin-left: 6px;
}

.app-list svg {
    display: block;
    width: 20px;
    height: 20px;
}

.current, .running {
    position: relative;
}

.current::after, .running::after {
    content: "";
    position: absolute;
    bottom: -3px;
    left: 5px;
    width: 10px;
    height: 2px;
    border-radius: 1px;
    background: #77bdea;
}

.running::after {
    left: 8px;
    width: 4px;
    background: #bbb;
}

.tray {
    justify-content: flex-end;
    gap: 5px;
    padding-right: 12px;
}

.tray svg:first-child {
    margin-right: 4px;
}

.language {
    margin: 0 5px;
}

.clock {
    margin-left: 6px;
    text-align: right;
}
```
